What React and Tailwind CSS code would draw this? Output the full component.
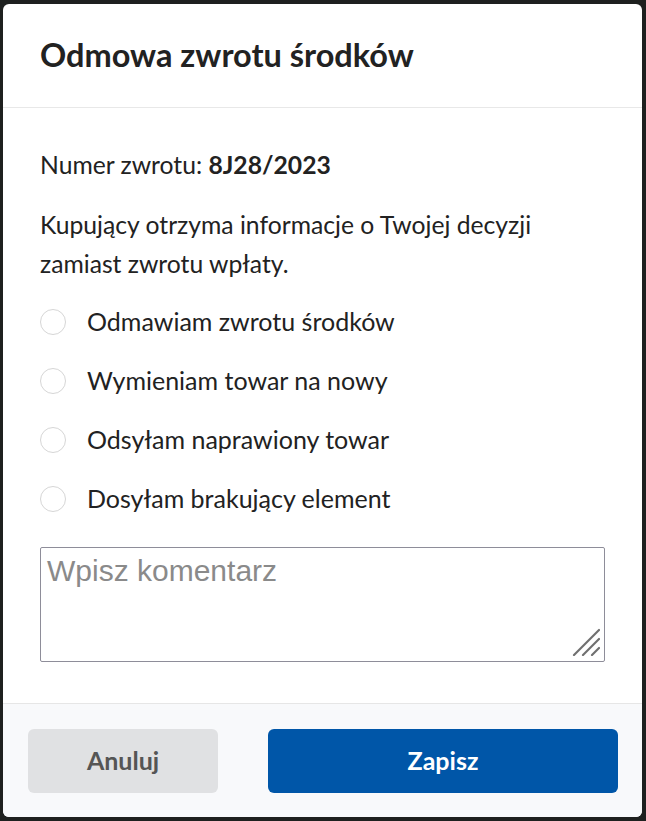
import React, { useState } from 'react';

const options = [
  'Odmawiam zwrotu środków',
  'Wymieniam towar na nowy',
  'Odsyłam naprawiony towar',
  'Dosyłam brakujący element',
];

const RefundDialog = () => {
  const [choice, setChoice] = useState(null);
  const [comment, setComment] = useState('');

  return (
    <div className="min-h-screen bg-[#1e201f] pt-[4px] pl-[3px] pr-[4px] pb-[4px] font-['Lato',sans-serif] text-[#222]">
      <div className="flex h-[813px] flex-col overflow-hidden rounded-[6px] bg-white">
        {/* Header */}
        <div className="flex h-[104px] shrink-0 items-center border-b border-[#e8e8e8] px-[37px]">
          <h1 className="text-[32.5px] font-bold leading-none">Odmowa zwrotu środków</h1>
        </div>

        {/* Body */}
        <div className="flex flex-1 flex-col px-[37px] pt-[38px]">
          <p className="text-[24.7px] leading-[38px]">
            Numer zwrotu: <span className="font-bold">8J28/2023</span>
          </p>
          <p className="mt-[21px] text-[24.7px] leading-[39px]">
            Kupujący otrzyma informacje o Twojej decyzji
            <br />
            zamiast zwrotu wpłaty.
          </p>

          <div className="mt-[9px] flex flex-col">
            {options.map((label, i) => (
              <label
                key={label}
                className="flex h-[59px] cursor-pointer items-center gap-[21px]"
                onClick={() => setChoice(i)}
              >
                <span className="flex h-[26px] w-[26px] shrink-0 items-center justify-center rounded-full border border-[#d6d6d6] bg-white">
                  {choice === i && <span className="h-[12px] w-[12px] rounded-full bg-[#0056a8]" />}
                </span>
                <span className="text-[25px]">{label}</span>
              </label>
            ))}
          </div>

          <div className="relative mt-[19px] h-[115px] w-[565px]">
            <textarea
              value={comment}
              onChange={(e) => setComment(e.target.value)}
              placeholder="Wpisz komentarz"
              className="h-full w-full resize-none rounded-[2px] border border-[#8e8d99] px-[6px] pt-[6px] pb-[4px] font-['Liberation_Sans',Arial,sans-serif] text-[30px] leading-[34px] text-[#222] placeholder:text-[#8a8a8a] focus:outline-none"
            />
            {/* resize grip */}
            <svg className="pointer-events-none absolute bottom-[6px] right-[5px]" width="28" height="28" viewBox="0 0 28 28">
              <g stroke="#6f6f6f" strokeWidth="2.2" strokeLinecap="round">
                <line x1="2" y1="27" x2="27" y2="2" />
                <line x1="11" y1="27" x2="27" y2="11" />
                <line x1="20" y1="27" x2="27" y2="20" />
              </g>
            </svg>
          </div>
        </div>

        {/* Footer */}
        <div className="flex h-[114px] shrink-0 items-start gap-[50px] border-t border-[#e6e6e6] bg-[#f8f9fb] pl-[25px] pr-[24px] pt-[25px]">
          <button className="h-[64px] w-[190px] rounded-[6px] bg-[#e0e1e3] text-[25px] font-bold text-[#555]">
            Anuluj
          </button>
          <button className="h-[64px] w-[350px] rounded-[6px] bg-[#0056a8] text-[25px] font-bold text-white">
            Zapisz
          </button>
        </div>
      </div>
    </div>
  );
};

export default function App() {
  return <RefundDialog />;
}
